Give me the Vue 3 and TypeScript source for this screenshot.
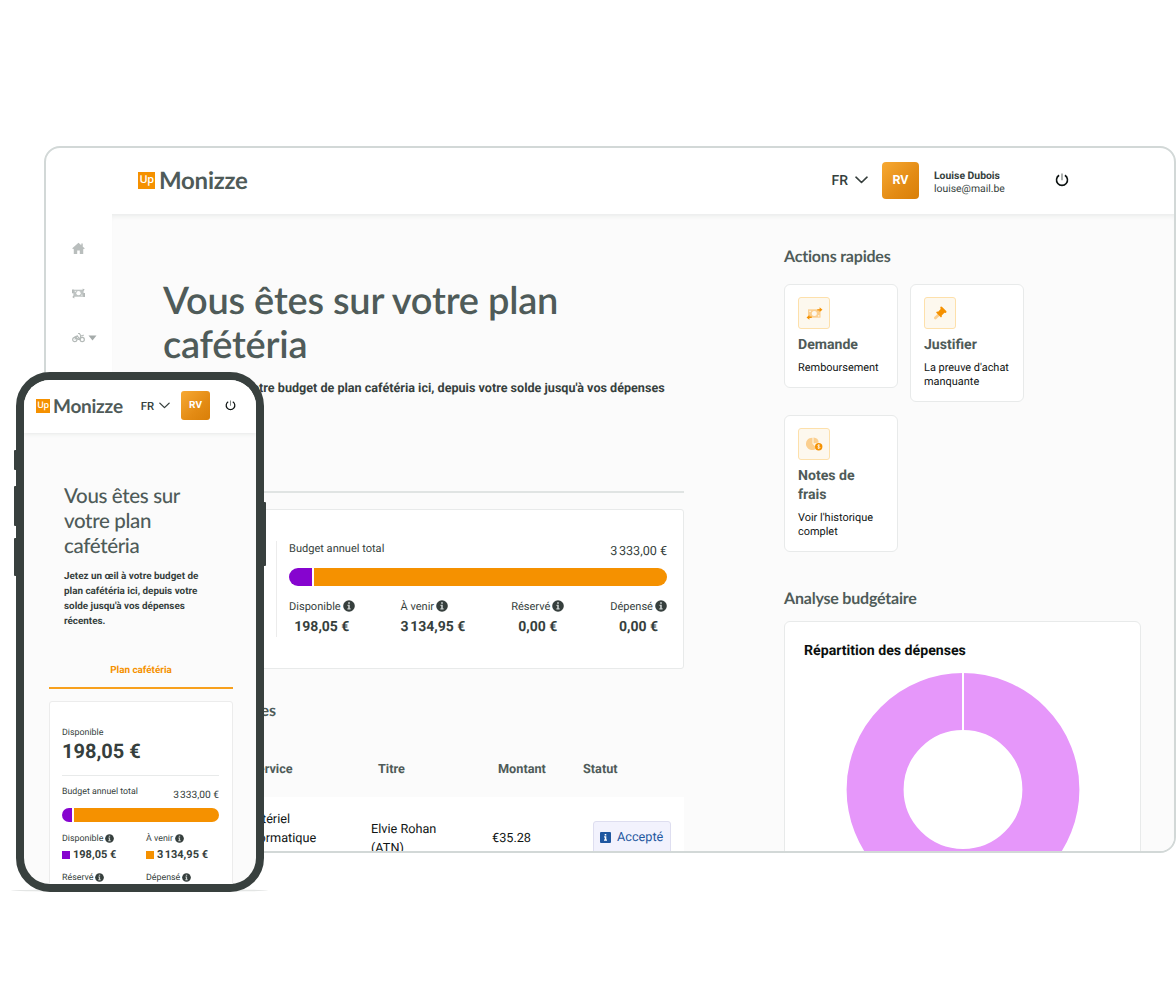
<template>
  <div class="stage">
    <svg class="sprite" width="0" height="0" aria-hidden="true">
      <symbol id="info" viewBox="0 0 12 12">
        <circle cx="6" cy="6" r="5.800" fill="#363f3d" />
        <path d="M5.1 2.2h1.800v1.600H5.1zM4.500 4.700h2.300v3.600h.8v1.200H4.400V8.300h.8V5.900h-.7z" fill="#c9cfce" />
      </symbol>
      <symbol id="chevron" viewBox="0 0 13 8">
        <path d="M1 1.200l5.500 5.300L12 1.200" fill="none" stroke="#363f3d" stroke-width="1.600" stroke-linecap="round" stroke-linejoin="round" />
      </symbol>
      <symbol id="power" viewBox="0 0 14 14">
        <path d="M4.100 2.200a5.500 5.500 0 1 0 5.800 0" fill="none" stroke="#0e1413" stroke-width="1.600" />
        <path d="M7 .6v6.600" stroke="#7d8482" stroke-width="1.300" />
      </symbol>
    </svg>

    <div class="desktop">
      <header class="topbar">
        <div class="logo">
          <span class="logo-mark">Up</span>
          <span class="logo-name">Monizze</span>
        </div>
        <div class="lang">
          <span>FR</span>
          <svg width="13" height="8"><use href="#chevron" /></svg>
        </div>
        <div class="avatar">RV</div>
        <div class="user">
          <b>Louise Dubois</b>
          <span>louise@mail.be</span>
        </div>
        <svg class="power" width="14" height="14"><use href="#power" /></svg>
      </header>

      <div class="body">
        <nav class="sidebar">
          <svg width="13" height="13" viewBox="0 0 14 13">
            <path d="M7 .4L.3 6.300l.8 1 .8-.6v5.600h3.700V8.700h2.800v3.600h3.700V6.700l.8.6.8-1-2.100-1.800V1.100H10v1.900z" fill="#b9bebd" />
          </svg>
          <svg width="13" height="11" viewBox="0 0 14 11">
            <path d="M1.500 1.400h11v7.600h-11z" fill="#bfc4c3" />
            <circle cx="7" cy="5.200" r="2.300" fill="#fff" />
            <path d="M3 3.200h1.200M10 7.300h1.200" stroke="#fff" />
            <path d="M0 1.200h2v4H0zM14 9.200h-2V5h2zM11.500 0l2.300 1.500-2.300 1.600zM2.500 7.400L.2 9.200 2.500 11z" fill="#b4b9b8" />
          </svg>
          <div class="nav-group">
            <svg width="13" height="11" viewBox="0 0 14 11">
              <g fill="none" stroke="#b4bab8" stroke-width="1.300">
                <circle cx="3" cy="7.600" r="2.300" />
                <circle cx="11" cy="7.600" r="2.300" />
                <path d="M3 7.600l2.500-4 3 4h-2L3 4M8.500 7.600l1-4L8 1.200H6.500M9.500 3.600h2l1-1" />
              </g>
            </svg>
            <svg width="9" height="6" viewBox="0 0 9 6"><path d="M.5.500h8L4.500 5.500z" fill="#a5abaa" /></svg>
          </div>
        </nav>

        <main class="content">
          <section class="plan">
            <h1>Vous êtes sur votre plan<br />cafétéria</h1>
            <p class="intro">Jetez un œil à votre budget de plan cafétéria ici, depuis votre solde jusqu'à vos dépenses</p>
            <div class="rule"></div>

            <div class="budget-card">
              <div class="budget">
                <div class="budget-head">
                  <span>Budget annuel total</span>
                  <span class="total">{{ total }}</span>
                </div>
                <div class="bar">
                  <div class="bar-available" :style="{ width: availableShare + '%' }"></div>
                  <div class="bar-upcoming"></div>
                </div>
                <div class="amounts">
                  <div v-for="amount in amounts" :key="amount.label" class="amount">
                    <span class="amount-label">{{ amount.label }}<svg width="12" height="12"><use href="#info" /></svg></span>
                    <b>{{ amount.value }}</b>
                  </div>
                </div>
              </div>
            </div>

            <h2 class="expenses-title">Mes dépenses</h2>
            <div class="table">
              <div class="row head">
                <span>Service</span>
                <span>Titre</span>
                <span>Montant</span>
                <span>Statut</span>
              </div>
              <div v-for="expense in expenses" :key="expense.title" class="row line">
                <span>{{ expense.service }}</span>
                <span>{{ expense.title }}</span>
                <span>{{ expense.amount }}</span>
                <span class="status">
                  <svg width="11" height="11" viewBox="0 0 11 11">
                    <rect width="11" height="11" rx="1" fill="#1f57a0" />
                    <path d="M4.700 2h1.600v1.400H4.700zM4.100 4.300h2.200v3.300H7v1.100H4V7.600h.8V5.400h-.7z" fill="#fff" />
                  </svg>
                  {{ expense.status }}
                </span>
              </div>
            </div>
          </section>

          <aside class="side">
            <h2>Actions rapides</h2>
            <div class="actions">
              <div v-for="action in actions" :key="action.title" class="action">
                <div class="action-icon">
                  <svg v-if="action.icon === 'refund'" width="17" height="13" viewBox="0 0 18 14">
                    <path d="M2 2.500h13.500v9H2z" fill="#fbcf8f" />
                    <circle cx="8.800" cy="7" r="2.700" fill="#fdf8ee" />
                    <path d="M3.500 4h1.500v1.300H3.500zM12.700 9h1.500v1.300h-1.500z" fill="#fdf8ee" />
                    <path d="M12 2.300h2.500V.300L17.600 3l-3.100 2.500V3.700H12zM6 10.300H3.500V8.500L.4 11.200l3.100 2.500v-1.900H6z" fill="#f59100" />
                  </svg>
                  <svg v-else-if="action.icon === 'gavel'" width="14" height="14" viewBox="0 0 14 14">
                    <path d="M5.600 6.900l2 2-4.300 4.200c-1.300 1-3-.7-2-2z" fill="#fbcf8f" />
                    <path d="M7.900.400l1 .4 4.300 4.300.4 1-1 1-1.200-.3-2.700 2.600.2 1.100-.9.900-4.900-4.900.9-.9 1.100.2 2.600-2.700-.5-1.700z" fill="#f59100" />
                  </svg>
                  <svg v-else width="17" height="14" viewBox="0 0 17 14">
                    <path d="M6.500.7v6l4.300 4.300A6.200 6.200 0 1 1 6.500.700z" fill="#fbcf8f" />
                    <path d="M7.500.500a5.500 5.500 0 0 1 5.200 4.900L7.500 6.500z" fill="#fbcf8f" />
                    <circle cx="12.700" cy="9.700" r="3.700" fill="#f59100" />
                    <path d="M13.900 8.400c-.8-.7-2.300-.5-2.200.4.100 1 2.200.7 2.200 1.700 0 .9-1.600 1-2.400.3M12.700 7.400v4.600" fill="none" stroke="#fff" stroke-width=".7" />
                  </svg>
                </div>
                <h3>{{ action.title }}</h3>
                <p>{{ action.text }}</p>
              </div>
            </div>

            <h2 class="analysis-title">Analyse budgétaire</h2>
            <div class="analysis">
              <h3>Répartition des dépenses</h3>
              <svg class="donut" width="234" height="234" viewBox="0 0 234 234">
                <circle cx="117" cy="116.500" r="87.900" fill="none" stroke="#e697fa" stroke-width="57" />
                <path d="M117 0v59" stroke="#fff" stroke-width="2" />
              </svg>
            </div>
          </aside>
        </main>
      </div>
    </div>

    <div class="phone-shadow"></div>
    <div class="phone">
      <i class="key silent"></i>
      <i class="key up"></i>
      <i class="key down"></i>
      <i class="key side-key"></i>
      <div class="screen">
        <header class="m-topbar">
          <div class="logo small">
            <span class="logo-mark">Up</span>
            <span class="logo-name">Monizze</span>
          </div>
          <div class="lang small">
            <span>FR</span>
            <svg width="11" height="7"><use href="#chevron" /></svg>
          </div>
          <div class="avatar small">RV</div>
          <svg class="power" width="11" height="11"><use href="#power" /></svg>
        </header>
        <h1>Vous êtes sur<br />votre plan<br />cafétéria</h1>
        <p class="m-intro">Jetez un œil à votre budget de<br />plan cafétéria ici, depuis votre<br />solde jusqu'à vos dépenses<br />récentes.</p>
        <div class="m-tab">Plan cafétéria</div>
        <div class="m-card">
          <span class="m-label">Disponible</span>
          <b class="m-available">198,05 €</b>
          <div class="m-head">
            <span>Budget annuel total</span>
            <span class="total">{{ total }}</span>
          </div>
          <div class="bar small">
            <div class="bar-available" :style="{ width: availableShare + '%' }"></div>
            <div class="bar-upcoming"></div>
          </div>
          <div class="m-amounts">
            <div v-for="(amount, index) in amounts" :key="amount.label" class="m-amount">
              <span class="m-amount-label">{{ amount.label }}<svg width="9" height="9"><use href="#info" /></svg></span>
              <b v-if="index < 2"><i :style="{ background: amount.color }"></i>{{ amount.value }}</b>
            </div>
          </div>
        </div>
      </div>
    </div>
  </div>
</template>

<script setup lang="ts">
import { ref } from 'vue'

interface Amount {
  label: string
  value: string
  color?: string
}

// Thousands are split by a narrow no-break space
const total = ref('3\u202f333,00 €')

// Share of the yearly budget that is available now
const availableShare = ref(6.1)

const amounts = ref<Amount[]>([
  { label: 'Disponible', value: '198,05 €', color: '#8604cf' },
  { label: 'À venir', value: '3\u202f134,95 €', color: '#f59100' },
  { label: 'Réservé', value: '0,00 €' },
  { label: 'Dépensé', value: '0,00 €' }
])

const expenses = ref([
  { service: 'Matériel informatique', title: 'Elvie Rohan (ATN)', amount: '€35.28', status: 'Accepté' }
])

const actions = ref([
  { icon: 'refund', title: 'Demande', text: 'Remboursement' },
  { icon: 'gavel', title: 'Justifier', text: "La preuve d'achat manquante" },
  { icon: 'expenses', title: 'Notes de frais', text: "Voir l'historique complet" }
])
</script>

<style>
body {
  background: #fff;
}
</style>

<style scoped>
* {
  box-sizing: border-box;
}

.stage {
  position: relative;
  width: 1176px;
  height: 1000px;
  padding: 146px 0 0 44px;
  overflow: hidden;
  background: #fff;
  color: #363f3d;
  font-family: Roboto, sans-serif;
  text-rendering: geometricPrecision;
}

.sprite {
  position: absolute;
}

h1,
h2,
h3,
p {
  margin: 0;
}

h1,
h2 {
  font-family: Lato, sans-serif;
  color: #4f5b59;
}

svg {
  display: block;
  flex: none;
}

.desktop {
  display: flex;
  flex-direction: column;
  width: 1132px;
  height: 707px;
  border: 2px solid #d2d8d7;
  border-radius: 16px;
  overflow: hidden;
}

.topbar {
  display: flex;
  align-items: center;
  flex: none;
  height: 66px;
  padding: 0 105px 2px 92px;
}

.logo {
  display: flex;
  align-items: center;
  gap: 4px;
  margin-right: auto;
}

.logo-mark {
  width: 17px;
  height: 17px;
  background: #f59100;
  color: #fff;
  font: 600 11px/15px 'Open Sans', sans-serif;
  letter-spacing: -0.4px;
  text-align: center;
}

.logo-name {
  padding-top: 2px;
  color: #4f5b59;
  font: 700 24px/30px Lato, sans-serif;
  letter-spacing: -0.25px;
}

.lang {
  display: flex;
  align-items: center;
  gap: 7px;
  font-size: 14px;
  font-weight: 500;
}

.lang span {
  padding-top: 2px;
}

.avatar {
  width: 37px;
  height: 37px;
  margin-left: 14px;
  border-radius: 4px;
  background: linear-gradient(135deg, #f7a933, #e38b14 60%, #d97f08);
  color: #fff;
  font-size: 12.5px;
  font-weight: 700;
  line-height: 37px;
  text-align: center;
}

.user {
  display: flex;
  flex-direction: column;
  width: 121px;
  margin-left: 15px;
  padding-top: 3px;
  font-size: 10.4px;
  line-height: 13px;
}

.body {
  display: flex;
  flex: 1;
  min-height: 0;
}

.sidebar {
  display: flex;
  flex-direction: column;
  flex: none;
  gap: 33px;
  width: 66px;
  padding: 28px 0 0 26px;
}

.nav-group {
  display: flex;
  align-items: center;
  gap: 3px;
}

.content {
  display: flex;
  align-items: flex-start;
  flex: 1;
  padding-left: 51px;
  overflow: hidden;
  background: #fbfbfb;
  box-shadow: inset 0 5px 5px -3px #e9ebea;
}

.plan {
  width: 521px;
}

.plan h1 {
  height: 153px;
  padding-top: 64px;
  font-size: 38px;
  font-weight: 600;
  letter-spacing: -0.22px;
  line-height: 44px;
  white-space: nowrap;
}

.intro {
  height: 102px;
  padding-top: 12px;
  font-size: 12.6px;
  font-weight: 700;
  line-height: 20px;
  white-space: nowrap;
}

.rule {
  height: 2px;
  margin-top: 22px;
  background: #e0e4e3;
}

.budget-card {
  display: flex;
  justify-content: flex-end;
  height: 160px;
  margin-top: 16px;
  padding: 31px 16px 0;
  border: 1px solid #e8eaea;
  border-radius: 3px;
  background: #fff;
}

.budget {
  width: 391px;
  height: 96px;
  padding-left: 12px;
  border-left: 1px solid #ececec;
}

.budget-head {
  display: flex;
  justify-content: space-between;
  height: 17px;
  padding-top: 1px;
  font-size: 11.05px;
  line-height: 14px;
}

.total {
  padding-top: 3px;
  font-size: 12.6px;
}

.bar {
  display: flex;
  gap: 2px;
  height: 18px;
  margin-top: 10px;
  border-radius: 9px;
  overflow: hidden;
}

.bar-available {
  background: #8604cf;
}

.bar-upcoming {
  flex: 1;
  background: #f59100;
}

.amounts {
  display: flex;
  justify-content: space-between;
  padding-top: 12px;
}

.amount {
  display: flex;
  flex-direction: column;
}

.amount-label {
  display: flex;
  align-items: flex-start;
  gap: 2px;
  font-size: 11.05px;
  line-height: 18px;
}

.amount-label svg {
  margin-top: 2px;
}

.amount b {
  font-size: 14px;
  line-height: 22px;
  text-align: center;
}

.expenses-title {
  width: 113px;
  margin-top: 32px;
  font-size: 16px;
  line-height: 20px;
  text-align: right;
}

.row {
  display: grid;
  grid-template-columns: 80px 128px 121px 101px 91px;
}

.head {
  padding-top: 39px;
  height: 76px;
  color: #4f5b59;
  font-size: 12.7px;
  font-weight: 700;
  line-height: 20px;
}

.head span:first-child {
  padding-left: 7px;
}

.row span:first-child {
  grid-column: 2;
}

.head span:nth-child(2) {
  padding-left: 7px;
}

.head span:nth-child(3) {
  padding-left: 6px;
}

.head span:nth-child(4) {
  margin-left: -10px;
}

.line {
  height: 80px;
  padding-top: 13px;
  background: #fff;
  color: #101514;
  font-size: 12.7px;
  line-height: 19px;
}

.line span:first-child {
  width: 90px;
  padding-left: 1px;
}

.line span:nth-child(2) {
  width: 80px;
  padding-top: 10px;
}

.line span:nth-child(3) {
  padding-top: 19px;
}

.line .status {
  display: flex;
  align-items: center;
  gap: 6px;
  width: 78px;
  height: 33px;
  margin-top: 11px;
  padding-left: 6px;
  border: 1px solid #dedef0;
  border-radius: 3px;
  background: #f2f2fd;
  color: #1f57a0;
}

.side {
  width: 357px;
  margin-left: 100px;
  padding-top: 33px;
}

.side h2 {
  font-size: 16px;
  letter-spacing: -0.2px;
  line-height: 20px;
}

.actions {
  display: flex;
  flex-wrap: wrap;
  align-items: flex-start;
  gap: 13px 12px;
  padding-top: 17px;
}

.action {
  width: 114px;
  padding: 12px 10px 12px 13px;
  border: 1px solid #e8eaea;
  border-radius: 6px;
  background: #fff;
}

.action-icon {
  display: flex;
  align-items: center;
  justify-content: center;
  width: 32px;
  height: 32px;
  border: 1px solid #fde0ab;
  border-radius: 3px;
  background: #fdf8ee;
}

.action h3 {
  width: 76px;
  padding-top: 7px;
  color: #4f5b59;
  font-size: 14.1px;
  line-height: 19px;
}

.action p {
  padding-top: 6px;
  color: #101514;
  font-size: 10.95px;
  line-height: 14px;
}

.side .analysis-title {
  margin-top: 37px;
}

.analysis {
  display: flex;
  flex-direction: column;
  height: 330px;
  margin-top: 12px;
  padding: 19px 0 0 19px;
  border: 1px solid #e8eaea;
  border-radius: 6px;
  background: #fff;
}

.analysis h3 {
  color: #0b0f0e;
  font-size: 14.15px;
  line-height: 20px;
}

.donut {
  margin: 12px 0 0 42px;
}

/* Phone in front of the desktop frame */
.phone {
  position: absolute;
  left: 16px;
  top: 372px;
  width: 248px;
  height: 520px;
  border: 8px solid #38403e;
  border-radius: 34px;
  background: #38403e;
}

.phone-shadow {
  position: absolute;
  left: 11px;
  top: 889px;
  width: 257px;
  height: 3px;
  border-radius: 50%;
  background: #e3e5e4;
}

.key {
  position: absolute;
  left: -10px;
  width: 3px;
  border-radius: 1px;
  background: #38403e;
}

.silent {
  top: 70px;
  height: 20px;
}

.up {
  top: 106px;
  height: 40px;
}

.down {
  top: 158px;
  height: 38px;
}

.side-key {
  left: 239px;
  top: 122px;
  height: 64px;
}

.screen {
  width: 232px;
  height: 504px;
  border-radius: 26px;
  overflow: hidden;
  background: #fbfbfb;
}

.m-topbar {
  display: flex;
  align-items: center;
  height: 53px;
  padding: 0 20px 2px 12px;
  background: #fff;
  box-shadow: 0 1px 4px #e6e8e7;
}

.logo.small {
  gap: 3px;
}

.small .logo-mark {
  width: 14px;
  height: 14px;
  font-size: 9px;
  line-height: 12px;
}

.small .logo-name {
  font-size: 19px;
  line-height: 24px;
}

.lang.small {
  gap: 5px;
  font-size: 11.3px;
}

.avatar.small {
  width: 29px;
  height: 29px;
  margin: 0 15px 0 11px;
  border-radius: 3px;
  font-size: 10px;
  line-height: 29px;
}

.screen h1 {
  padding: 51px 0 0 40px;
  font-size: 20.5px;
  font-weight: 500;
  letter-spacing: -0.35px;
  line-height: 25px;
  white-space: nowrap;
}

.m-intro {
  padding: 10px 0 0 40px;
  font-size: 9.9px;
  font-weight: 700;
  line-height: 15px;
  white-space: nowrap;
}

.m-tab {
  height: 29px;
  margin: 31px 23px 0 25px;
  padding-top: 1px;
  border-bottom: 2px solid #f7a01d;
  color: #f59100;
  font-size: 9.9px;
  font-weight: 700;
  line-height: 20px;
  text-align: center;
}

.m-card {
  display: flex;
  flex-direction: column;
  height: 220px;
  margin: 12px 23px 0 25px;
  padding: 24px 13px 0 12px;
  border: 1px solid #ececec;
  border-radius: 3px;
  background: #fff;
}

.m-label {
  font-size: 8.85px;
  line-height: 14px;
}

.m-available {
  height: 36px;
  border-bottom: 1px solid #e8eaea;
  font-size: 20px;
  line-height: 22px;
}

.m-head {
  display: flex;
  justify-content: space-between;
  padding-top: 10px;
  font-size: 8.8px;
  line-height: 13px;
}

.m-head .total {
  font-size: 10.2px;
}

.bar.small {
  flex: none;
  height: 14px;
  margin-top: 6px;
}

.m-amounts {
  display: grid;
  grid-template-columns: 84px 74px;
  row-gap: 8px;
  padding-top: 10px;
}

.m-amount-label {
  display: flex;
  gap: 2px;
  font-size: 8.85px;
  line-height: 14px;
}

.m-amount-label svg {
  margin-top: 2px;
}

.m-amount b {
  display: flex;
  align-items: center;
  gap: 3px;
  font-size: 11px;
  line-height: 17px;
}

.m-amount i {
  width: 8px;
  height: 8px;
}
</style>
